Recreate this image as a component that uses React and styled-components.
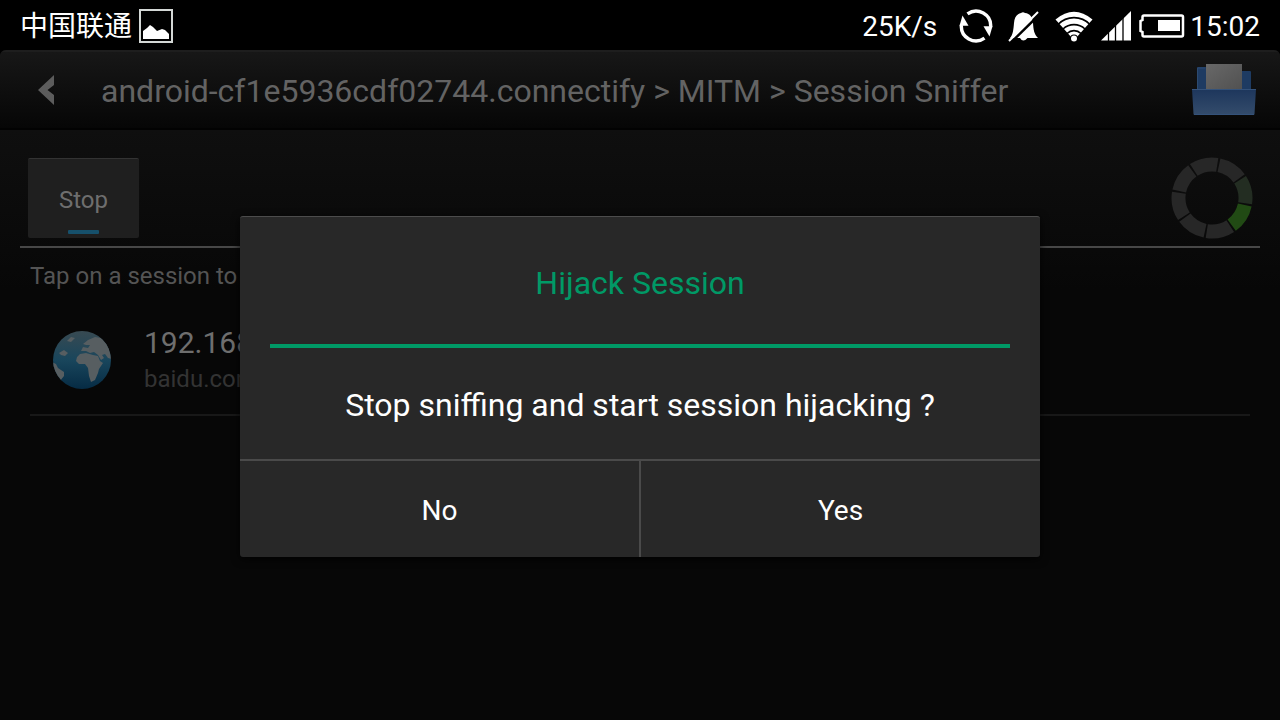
import React from "react";
import styled, { createGlobalStyle } from "styled-components";

const GlobalStyle = createGlobalStyle`
  * { box-sizing: border-box; }
  body {
    margin: 0;
    background: #000;
    font-family: Roboto, "Noto Sans CJK SC", sans-serif;
  }
`;

const Screen = styled.div`
  position: relative;
  display: flex;
  flex-direction: column;
  min-height: 100vh;
  background: #000;
`;

const StatusBar = styled.header`
  display: flex;
  align-items: center;
  justify-content: space-between;
  height: 50px;
  padding: 2px 20px 0;
  color: #fff;
  font-size: 28px;
  line-height: 32px;
`;

const StatusGroup = styled.div`
  display: flex;
  align-items: center;
  gap: ${(p) => p.$gap}px;
`;

const StatusText = styled.span`
  padding-top: 2px;
`;

const Icon = styled.svg`
  display: block;
  flex: none;
`;

const AppWindow = styled.main`
  flex: 1;
  border-radius: 6px 6px 0 0;
  overflow: hidden;
  background: linear-gradient(#0f0f0f 80px, #070707 240px);
`;

const TitleBar = styled.div`
  display: flex;
  align-items: center;
  height: 80px;
  padding: 0 24px 0 36px;
  border-top: 2px solid #1e1e1e;
  border-bottom: 2px solid #020202;
  background: linear-gradient(#171717, #060606);
`;

const IconButton = styled.button`
  display: flex;
  padding: 0;
  border: 0;
  background: none;
`;

const Title = styled.h1`
  flex: 1;
  margin: 0 0 0 45px;
  padding-top: 2px;
  color: #636363;
  font-size: 32px;
  line-height: 40px;
  font-weight: 400;
  white-space: nowrap;
`;

const Toolbar = styled.div`
  display: flex;
  align-items: center;
  justify-content: space-between;
  height: 118px;
  margin: 0 20px;
  padding: 19px 6px 0 8px;
  border-bottom: 2px solid #474747;
`;

const ToggleButton = styled.button`
  display: flex;
  flex-direction: column;
  align-items: center;
  justify-content: flex-end;
  gap: 14px;
  width: 111px;
  height: 80px;
  padding: 0 0 4px;
  border: 0;
  border-top: 1px solid #333;
  border-radius: 2px;
  background: #1f1f1f;
  color: #6e6e6e;
  font: inherit;
  font-size: 24px;
  line-height: 32px;
`;

const ToggleLight = styled.span`
  width: 31px;
  height: 4px;
  border-radius: 1px;
  background: #16506b;
`;

const Hint = styled.p`
  margin: 12px 30px 0;
  color: #545454;
  font-size: 24px;
  line-height: 32px;
`;

const SessionList = styled.ul`
  margin: 0 30px;
  padding: 0;
  list-style: none;
`;

const SessionRow = styled.li`
  display: flex;
  align-items: center;
  gap: 32px;
  height: 124px;
  padding: 14px 22px 0;
  border-bottom: 2px solid #181818;
`;

const SessionText = styled.div`
  padding-bottom: 2px;
`;

const Address = styled.div`
  color: #6e6e6e;
  font-size: 30px;
  line-height: 40px;
`;

const Domain = styled.div`
  color: #333;
  font-size: 24px;
  line-height: 32px;
`;

const DialogLayer = styled.div`
  position: absolute;
  inset: 52px 0 0;
  display: flex;
  align-items: center;
  justify-content: center;
`;

const Dialog = styled.section`
  width: 62.5%;
  border-top: 1px solid #4c4c4c;
  border-radius: 3px;
  background: #282828;
  box-shadow: 0 2px 8px rgba(0, 0, 0, 0.8);
  text-align: center;
  overflow: hidden;
`;

const DialogTitle = styled.h2`
  margin: 0 30px;
  padding: 46px 0 41px;
  border-bottom: 4px solid #009966;
  color: #009966;
  font-size: 32px;
  line-height: 40px;
  font-weight: 400;
`;

const Message = styled.p`
  margin: 0;
  padding: 37px 30px 34px;
  color: #fff;
  font-size: 32px;
  line-height: 40px;
`;

const Actions = styled.div`
  display: flex;
  border-top: 2px solid #4a4a4a;
`;

const ActionButton = styled.button`
  flex: 1 1 0;
  height: 96px;
  padding: 4px 0 0;
  border: 0;
  background: none;
  color: #fff;
  font: inherit;
  font-size: 28px;
  line-height: 32px;

  & + & {
    border-left: 2px solid #4a4a4a;
  }
`;

const PictureIcon = () => (
  <Icon width="34" height="34" viewBox="0 0 34 34" aria-hidden="true">
    <rect x="1" y="1" width="32" height="32" fill="none" stroke="#d4d8d6" strokeWidth="2" />
    <path d="M4 30V22L8 19L11 16L14 18L18 22L23 20L26 21L30 25V30Z" fill="#fff" />
  </Icon>
);

const SyncIcon = () => (
  <Icon width="34" height="34" viewBox="0 0 34 34" aria-hidden="true">
    <g id="half">
      <path d="M8.5 4.900A14.600 14.600 0 0 1 31.600 18" fill="none" stroke="#fff" strokeWidth="3.4" />
      <path d="M24.5 17.300H33.500L30.500 27.500Z" fill="#fff" />
    </g>
    <use href="#half" transform="rotate(180 17 17)" />
  </Icon>
);

const SilentIcon = () => (
  <Icon width="32" height="34" viewBox="0 0 32 34" aria-hidden="true">
    <path
      d="M2 29C5 26 5.500 20 6 14C6.500 8 9 5 13 4Q15 2.500 17 4C22 4.500 24.500 8 25 14C25.500 21 26 25 30 29H19.500Q15 34 12 29Z"
      fill="#fff"
    />
    <path d="M3 33.500L32 5" stroke="#000" strokeWidth="2.500" />
    <path d="M1 32L30 3" stroke="#fff" strokeWidth="2" />
  </Icon>
);

const WifiIcon = () => (
  <Icon width="38" height="32" viewBox="0 0 38 32" aria-hidden="true">
    <path d="M0.500 9.500Q19 -6 37.500 9.500L21 28H17Z" fill="#fff" />
    <g fill="none" stroke="#000" strokeWidth="1.600">
      <path d="M3 14.500A22 22 0 0 1 35 14.500" />
      <path d="M8 19A16 16 0 0 1 30 19" />
      <path d="M12 23.500A10 10 0 0 1 26 23.500" />
    </g>
    <circle cx="19" cy="28.500" r="4" fill="#000" />
    <circle cx="19" cy="28.500" r="3" fill="#fff" />
  </Icon>
);

const SignalIcon = () => (
  <Icon width="30" height="30" viewBox="0 0 30 30" aria-hidden="true">
    <path d="M0 29.500L30 0V29.500Z" fill="#fff" />
    <path d="M7.500 18V30M14.500 12V30M22 4V30" stroke="#000" strokeWidth="1.300" />
  </Icon>
);

const BatteryIcon = () => (
  <Icon width="46" height="24" viewBox="0 0 46 24" aria-hidden="true">
    <path d="M5 1.500H42.500Q44 1.500 44 3V21Q44 22.500 42.500 22.500H5Q3.500 22.500 3.500 21V18L1.500 17V7L3.500 6V3Q3.500 1.500 5 1.500Z" fill="none" stroke="#fff" strokeWidth="2.500" />
    <rect x="19" y="6" width="22" height="11" fill="#fff" />
  </Icon>
);

const BackIcon = () => (
  <Icon width="20" height="30" viewBox="0 0 20 30" aria-hidden="true">
    <path d="M18 0V10L11.500 15L18 20V30L2 15Z" fill="#5c5c5c" />
  </Icon>
);

const TrayIcon = () => (
  <Icon width="64" height="54" viewBox="0 0 64 54" aria-hidden="true">
    <defs>
      <linearGradient id="tray" x1="0" y1="0" x2="0" y2="1">
        <stop offset="0" stopColor="#1d365c" />
        <stop offset="1" stopColor="#344c6b" />
      </linearGradient>
      <linearGradient id="paper" x1="0" y1="0" x2="1" y2="1">
        <stop offset="0" stopColor="#686868" />
        <stop offset="1" stopColor="#505050" />
      </linearGradient>
    </defs>
    <path d="M5 27V5Q5 4 6 4H14L17 8H58Q59 8 59 9V27Z" fill="#1e3b62" />
    <path d="M5.500 26V5H13" fill="none" stroke="#2c4a70" />
    <rect x="14" y="1" width="36" height="27" fill="url(#paper)" />
    <path d="M0 26H64L62.500 51Q62.500 52 61 52H3Q1.500 52 1.500 51Z" fill="url(#tray)" />
    <path d="M0 26.500H64M2 51.500H62" stroke="#34527a" />
  </Icon>
);

const point = (radius, degrees) => {
  const a = (degrees * Math.PI) / 180;
  return `${42 + radius * Math.sin(a)} ${42 - radius * Math.cos(a)}`;
};

const segmentColors = ["#272727", "#232d22", "#214a14", "#272727", "#272727", "#272727", "#272727", "#272727"];

const Spinner = () => (
  <Icon width="84" height="84" viewBox="0 0 84 84" role="img" aria-label="Sniffing">
    {segmentColors.map((color, i) => {
      const from = 12 + i * 45;
      const to = from + 42;
      return (
        <path
          key={i}
          fill={color}
          d={`M${point(40.5, from)}A40.5 40.5 0 0 1 ${point(40.5, to)}L${point(26.5, to)}A26.5 26.5 0 0 0 ${point(26.5, from)}Z`}
        />
      );
    })}
  </Icon>
);

const GlobeIcon = () => (
  <Icon width="60" height="60" viewBox="0 0 60 60" aria-hidden="true">
    <defs>
      <linearGradient id="sea" x1="0" y1="0" x2="0" y2="1">
        <stop offset="0" stopColor="#384a52" />
        <stop offset="0.5" stopColor="#19465c" />
        <stop offset="1" stopColor="#062b44" />
      </linearGradient>
      <clipPath id="disc">
        <circle cx="30" cy="30" r="29" />
      </clipPath>
    </defs>
    <circle cx="30" cy="30" r="29" fill="url(#sea)" />
    <g clipPath="url(#disc)" fill="#575e61">
      <path d="M31 14L36 10L43 7L49 8L56 15L60 29L56 28L53 24L50 25L52 28L49 30L46 25L42 22L38 23L34 21L29 21L31 17L36 18L38 15L34 15Z" />
      <path d="M28 24L34 23L41 25L46 26L48 31L51 33L47 39L46 43L43 50L39 52L37 46L36 38L33 34L27 34L24 31L25 27Z" />
      <path d="M0 32L4 34L6 38L12 42L12 46L8 51L0 44Z" />
      <path d="M7 23L12 20L16 23L13 26L9 25Z" />
      <path d="M15 11L19 7L23 8L19 12Z" />
    </g>
  </Icon>
);

export default function App() {
  return (
    <Screen>
      <GlobalStyle />
      <StatusBar>
        <StatusGroup $gap={7}>
          <StatusText>中国联通</StatusText>
          <PictureIcon />
        </StatusGroup>
        <StatusGroup $gap={5}>
          <StatusGroup $gap={15}>
            <StatusGroup $gap={22}>
              <StatusText>25K/s</StatusText>
              <SyncIcon />
            </StatusGroup>
            <SilentIcon />
            <StatusGroup $gap={8}>
              <WifiIcon />
              <SignalIcon />
              <BatteryIcon />
            </StatusGroup>
          </StatusGroup>
          <StatusText>15:02</StatusText>
        </StatusGroup>
      </StatusBar>
      <AppWindow>
        <TitleBar>
          <IconButton aria-label="Back">
            <BackIcon />
          </IconButton>
          <Title>android-cf1e5936cdf02744.connectify &gt; MITM &gt; Session Sniffer</Title>
          <IconButton aria-label="Saved sessions">
            <TrayIcon />
          </IconButton>
        </TitleBar>
        <Toolbar>
          <ToggleButton aria-pressed="true">
            Stop
            <ToggleLight />
          </ToggleButton>
          <Spinner />
        </Toolbar>
        <Hint>Tap on a session to</Hint>
        <SessionList>
          <SessionRow>
            <GlobeIcon />
            <SessionText>
              <Address>192.168</Address>
              <Domain>baidu.com</Domain>
            </SessionText>
          </SessionRow>
        </SessionList>
      </AppWindow>
      <DialogLayer>
        <Dialog role="dialog" aria-modal="true" aria-labelledby="dialog-title">
          <DialogTitle id="dialog-title">Hijack Session</DialogTitle>
          <Message>Stop sniffing and start session hijacking ?</Message>
          <Actions>
            <ActionButton>No</ActionButton>
            <ActionButton>Yes</ActionButton>
          </Actions>
        </Dialog>
      </DialogLayer>
    </Screen>
  );
}
